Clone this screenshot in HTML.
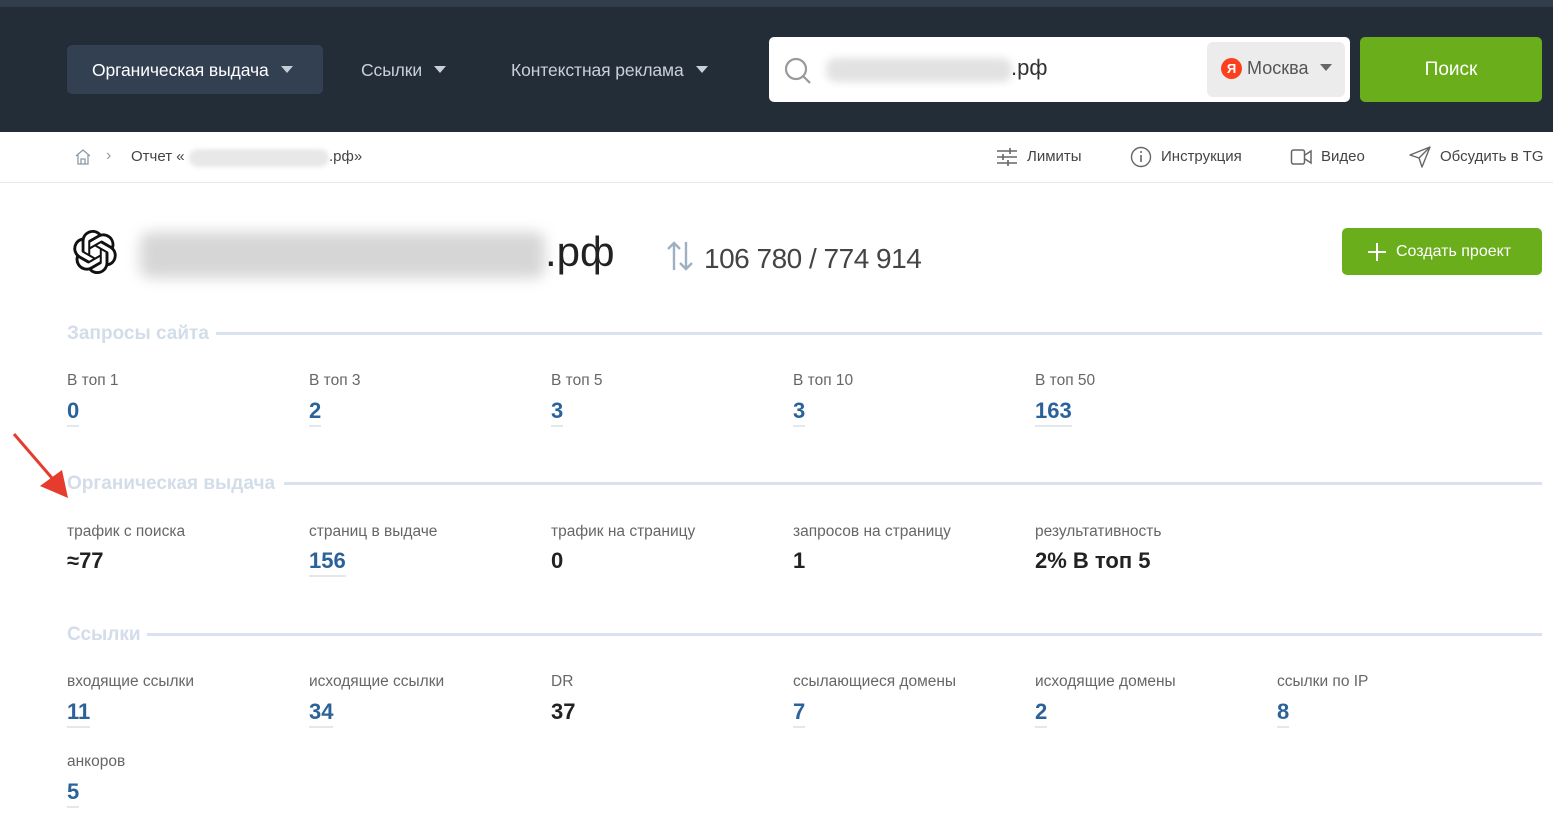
<!DOCTYPE html>
<html><head><meta charset="utf-8"><style>
*{margin:0;padding:0;box-sizing:border-box}
body{width:1553px;height:830px;overflow:hidden;background:#fff;font-family:"Liberation Sans",sans-serif;position:relative;color:#333}
.a{position:absolute;white-space:nowrap}
.hdr{position:absolute;left:0;top:0;width:1553px;height:132px;background:#232d38}
.strip{position:absolute;left:0;top:0;width:1553px;height:7px;background:#323e4b}
.tri{display:inline-block;width:0;height:0;border-left:6px solid transparent;border-right:6px solid transparent;border-top:7px solid currentColor;vertical-align:middle;margin-left:12px;margin-top:-3px}
.nav{font-size:17.5px;color:#c9d0d8;letter-spacing:-0.1px}
.blur{position:absolute;background:#e2e2e2;filter:blur(4px);border-radius:10px}
.lbl{font-size:15.5px;color:#666;letter-spacing:0}
.num{font-size:22px;font-weight:bold;color:#2a6299;border-bottom:2px solid #e3e8ee;padding-bottom:1px}
.numk{font-size:22px;font-weight:bold;color:#222}
.sec{font-size:19px;font-weight:bold;color:#d2dde9}
.line{position:absolute;height:3px;background:#d9e2ed}
.tb{font-size:15px;color:#444}
</style></head><body>
<div class="hdr"></div><div class="strip"></div>
<div class="a" style="left:67px;top:45px;width:256px;height:49px;background:#324052;border-radius:5px"></div>
<div class="a nav" style="left:92px;top:60px;color:#fff">Органическая выдача<span class="tri" style="color:#c5ccd4"></span></div>
<div class="a nav" style="left:361px;top:60px">Ссылки<span class="tri"></span></div>
<div class="a nav" style="left:511px;top:60px">Контекстная реклама<span class="tri"></span></div>
<div class="a" style="left:769px;top:37px;width:581px;height:65px;background:#fff;border-radius:5px"></div>
<svg class="a" style="left:782px;top:55px" width="32" height="32" viewBox="0 0 32 32"><circle cx="14" cy="14" r="10" fill="none" stroke="#999" stroke-width="2.2"/><line x1="21" y1="21" x2="28" y2="28" stroke="#999" stroke-width="2.2"/></svg>
<div class="blur" style="left:826px;top:58px;width:186px;height:24px"></div>
<div class="a" style="left:1011px;top:55px;font-size:22px;color:#333">.рф</div>
<div class="a" style="left:1207px;top:42px;width:138px;height:55px;background:#ececec;border-radius:6px"></div>
<div class="a" style="left:1221px;top:58px;width:21px;height:21px;border-radius:50%;background:#fc3f1d;color:#fff;font-size:13px;font-weight:bold;text-align:center;line-height:21px">Я</div>
<div class="a" style="left:1247px;top:58px;font-size:18px;color:#555">Москва<span class="tri" style="color:#666"></span></div>
<div class="a" style="left:1360px;top:37px;width:182px;height:65px;background:#6aaf1b;border-radius:5px;color:#fff;font-size:19px;text-align:center;line-height:65px">Поиск</div>

<svg class="a" style="left:74px;top:148px" width="18" height="18" viewBox="0 0 18 18"><path d="M2 8 L9 2 L16 8 M4 7 V16 H14 V7 M7 16 V11 H11 V16" fill="none" stroke="#8a9aa8" stroke-width="1.3"/></svg>
<div class="a" style="left:106px;top:147px;font-size:16px;color:#999">›</div>
<div class="a tb" style="left:131px;top:148px">Отчет «</div>
<div class="blur" style="left:189px;top:149px;width:140px;height:18px;filter:blur(2px);background:#e8e8e8"></div>
<div class="a tb" style="left:329px;top:148px">.рф»</div>
<svg class="a" style="left:996px;top:147px" width="22" height="20" viewBox="0 0 22 20"><g stroke="#666" stroke-width="1.6"><line x1="1" y1="4" x2="21" y2="4"/><line x1="1" y1="10" x2="21" y2="10"/><line x1="1" y1="16" x2="21" y2="16"/><line x1="14" y1="1" x2="14" y2="7"/><line x1="7" y1="7" x2="7" y2="13"/><line x1="12" y1="13" x2="12" y2="19"/></g></svg>
<div class="a tb" style="left:1027px;top:148px">Лимиты</div>
<svg class="a" style="left:1130px;top:146px" width="22" height="22" viewBox="0 0 22 22"><circle cx="11" cy="11" r="9.5" fill="none" stroke="#666" stroke-width="1.4"/><line x1="11" y1="9" x2="11" y2="16" stroke="#666" stroke-width="1.6"/><circle cx="11" cy="6" r="1" fill="#666"/></svg>
<div class="a tb" style="left:1161px;top:148px">Инструкция</div>
<svg class="a" style="left:1290px;top:148px" width="24" height="18" viewBox="0 0 24 18"><rect x="1.5" y="2" width="13" height="14" rx="2" fill="none" stroke="#666" stroke-width="1.5"/><path d="M15 7 L21 3 V15 L15 11" fill="none" stroke="#666" stroke-width="1.5"/></svg>
<div class="a tb" style="left:1321px;top:148px">Видео</div>
<svg class="a" style="left:1409px;top:146px" width="22" height="22" viewBox="0 0 22 22"><path d="M1 9 L21 1 L13 21 L10 12 Z M10 12 L21 1" fill="none" stroke="#666" stroke-width="1.4" stroke-linejoin="round"/></svg>
<div class="a tb" style="left:1440px;top:148px">Обсудить в TG</div>
<div class="a" style="left:0;top:182px;width:1553px;height:1px;background:#e8e8e8"></div>

<svg class="a" style="left:73px;top:230px" width="44" height="44" viewBox="0 0 24 24"><path fill="#111" d="M22.28 9.82a5.98 5.98 0 0 0-.52-4.910 6.05 6.05 0 0 0-6.51-2.9A6.07 6.07 0 0 0 4.98 4.18a5.98 5.98 0 0 0-4 2.9 6.05 6.05 0 0 0 .74 7.1 5.98 5.98 0 0 0 .51 4.91 6.05 6.05 0 0 0 6.52 2.9A5.98 5.98 0 0 0 13.26 24a6.06 6.06 0 0 0 5.77-4.210 5.99 5.99 0 0 0 4-2.9 6.06 6.06 0 0 0-.75-7.070zM13.26 22.43a4.48 4.48 0 0 1-2.88-1.04l.14-.08 4.78-2.76a.8.8 0 0 0 .39-.68v-6.74l2.02 1.17a.07.07 0 0 1 .04.05v5.58a4.5 4.5 0 0 1-4.49 4.5zM3.6 18.3a4.47 4.47 0 0 1-.54-3.01l.14.09 4.78 2.76a.77.77 0 0 0 .78 0l5.84-3.37v2.33a.08.08 0 0 1-.03.06L9.74 19.95a4.5 4.5 0 0 1-6.14-1.65zM2.34 7.9a4.48 4.48 0 0 1 2.37-1.97V11.6a.77.77 0 0 0 .39.68l5.81 3.35-2.02 1.17a.08.08 0 0 1-.07 0L4 14.02A4.5 4.5 0 0 1 2.34 7.9zm16.6 3.86L13.1 8.36l2.02-1.16a.08.08 0 0 1 .07 0l4.83 2.79a4.49 4.49 0 0 1-.68 8.1v-5.68a.79.79 0 0 0-.4-.66zm2.01-3.02l-.14-.09-4.77-2.78a.78.78 0 0 0-.79 0L9.41 9.23V6.9a.07.07 0 0 1 .03-.06l4.830-2.79a4.5 4.5 0 0 1 6.68 4.66zM8.31 12.86l-2.02-1.16a.08.08 0 0 1-.04-.06V6.07a4.5 4.5 0 0 1 7.38-3.45l-.14.08L8.7 5.46a.8.8 0 0 0-.39.68zm1.1-2.37l2.6-1.5 2.6 1.5v3l-2.6 1.5-2.6-1.5z"/></svg>
<div class="blur" style="left:140px;top:232px;width:405px;height:46px;filter:blur(7px);background:#d6d6d6"></div>
<div class="a" style="left:545px;top:228px;font-size:42px;color:#222">.рф</div>
<svg class="a" style="left:666px;top:241px" width="28" height="30" viewBox="0 0 28 30"><g stroke="#9fb0c2" stroke-width="2.4" fill="none"><path d="M8 29 V2 M2 8 L8 2 L14 8"/><path d="M20 1 V28 M14 22 L20 28 L26 22"/></g></svg>
<div class="a" style="left:704px;top:243px;font-size:28px;color:#444;letter-spacing:-0.5px">106 780 / 774 914</div>
<div class="a" style="left:1342px;top:228px;width:200px;height:47px;background:#6aaf1b;border-radius:5px;color:#fff;font-size:16px;line-height:47px;padding-left:54px">Создать проект</div>
<svg class="a" style="left:1366px;top:241px" width="22" height="22" viewBox="0 0 22 22"><path d="M11 2 V20 M2 11 H20" stroke="#fff" stroke-width="2"/></svg>

<div class="a sec" style="left:67px;top:323px">Запросы сайта</div>
<div class="line" style="left:216px;top:332px;width:1326px"></div>
<div class="a lbl" style="left:67px;top:372px">В топ 1</div><div class="a num" style="left:67px;top:398px">0</div>
<div class="a lbl" style="left:309px;top:372px">В топ 3</div><div class="a num" style="left:309px;top:398px">2</div>
<div class="a lbl" style="left:551px;top:372px">В топ 5</div><div class="a num" style="left:551px;top:398px">3</div>
<div class="a lbl" style="left:793px;top:372px">В топ 10</div><div class="a num" style="left:793px;top:398px">3</div>
<div class="a lbl" style="left:1035px;top:372px">В топ 50</div><div class="a num" style="left:1035px;top:398px">163</div>

<svg class="a" style="left:10px;top:430px" width="62" height="70" viewBox="0 0 62 70"><line x1="4" y1="4" x2="48" y2="55" stroke="#e53c2e" stroke-width="3"/><path d="M58 68 L30 56 L52 40 Z" fill="#e53c2e"/></svg>
<div class="a sec" style="left:67px;top:473px">Органическая выдача</div>
<div class="line" style="left:284px;top:482px;width:1258px"></div>
<div class="a lbl" style="left:67px;top:523px">трафик с поиска</div><div class="a numk" style="left:67px;top:548px">≈77</div>
<div class="a lbl" style="left:309px;top:523px">страниц в выдаче</div><div class="a num" style="left:309px;top:548px">156</div>
<div class="a lbl" style="left:551px;top:523px">трафик на страницу</div><div class="a numk" style="left:551px;top:548px">0</div>
<div class="a lbl" style="left:793px;top:523px">запросов на страницу</div><div class="a numk" style="left:793px;top:548px">1</div>
<div class="a lbl" style="left:1035px;top:523px">результативность</div><div class="a numk" style="left:1035px;top:548px">2% В топ 5</div>

<div class="a sec" style="left:67px;top:624px">Ссылки</div>
<div class="line" style="left:147px;top:633px;width:1395px"></div>
<div class="a lbl" style="left:67px;top:673px">входящие ссылки</div><div class="a num" style="left:67px;top:699px">11</div>
<div class="a lbl" style="left:309px;top:673px">исходящие ссылки</div><div class="a num" style="left:309px;top:699px">34</div>
<div class="a lbl" style="left:551px;top:673px">DR</div><div class="a numk" style="left:551px;top:699px">37</div>
<div class="a lbl" style="left:793px;top:673px">ссылающиеся домены</div><div class="a num" style="left:793px;top:699px">7</div>
<div class="a lbl" style="left:1035px;top:673px">исходящие домены</div><div class="a num" style="left:1035px;top:699px">2</div>
<div class="a lbl" style="left:1277px;top:673px">ссылки по IP</div><div class="a num" style="left:1277px;top:699px">8</div>
<div class="a lbl" style="left:67px;top:753px">анкоров</div><div class="a num" style="left:67px;top:779px">5</div>
</body></html>
